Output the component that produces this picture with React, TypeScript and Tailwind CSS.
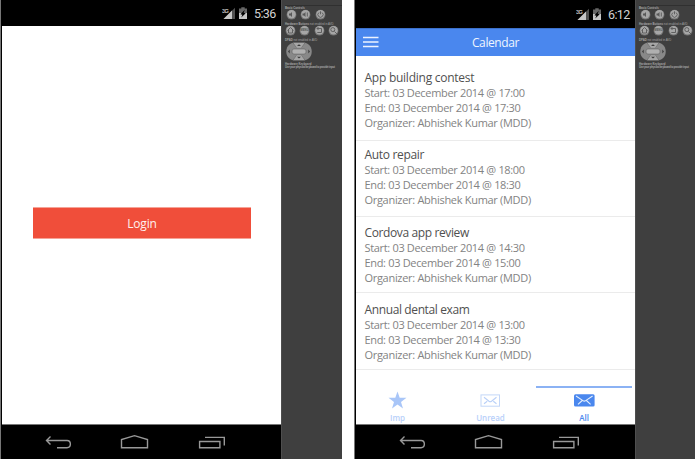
import React from "react";

const FONT = "font-['Open_Sans','Noto_Sans',sans-serif]";

const events = [
  { title: "App building contest", start: "17:00", end: "17:30", size: "h-[85px] pt-[14px]", tracking: "tracking-[-0.25px]" },
  { title: "Auto repair", start: "18:00", end: "18:30", size: "h-[76px] pt-[6px]", tracking: "tracking-[-0.32px]" },
  { title: "Cordova app review", start: "14:30", end: "15:00", size: "h-[76px] pt-[8px]", tracking: "tracking-[-0.38px]" },
  { title: "Annual dental exam", start: "13:00", end: "13:30", size: "h-[77px] pt-[9px]", tracking: "tracking-[-0.38px]" },
];

function StatusIcons() {
  return (
    <svg width="27" height="14" viewBox="0 0 27 14">
      <path d="M1.500 12 13 .7V12Z" fill="#505050" />
      <path d="M1.500 12 10 3.600V12Z" fill="#c6c6c6" />
      <text x="0" y="5.600" fontSize="6" fontWeight="700" fill="#c4c4c4" stroke="#000" strokeWidth=".6" paintOrder="stroke" fontFamily="Liberation Sans, sans-serif" textLength="7">3G</text>
      <path d="M17 1.600h2.300V.3h3.400v1.300H25V6h-8Z" fill="#666" />
      <path d="M17 6h8v6h-8Z" fill="#c6c6c6" />
      <path d="M22.800 2.800 18.400 7.200l2 .5-1.200 2.800 4.500-4.200-2-.5Z" fill="#000" />
    </svg>
  );
}

function StatusBar({ time, height }: { time: string; height: string }) {
  return (
    <div className={`flex shrink-0 items-center justify-end bg-black pr-[5px] pt-px ${height}`}>
      <StatusIcons />
      <span className="ml-[5px] w-[22px] whitespace-nowrap pt-px font-['Roboto',sans-serif] text-[12.5px] leading-none tracking-[-0.65px] text-[#d2d2d2]">{time}</span>
    </div>
  );
}

function NavBar() {
  return (
    <div className="h-[35px] shrink-0 border-t border-[#777] bg-black">
      <svg width="279" height="34" viewBox="0 0 279 34" fill="none" stroke="#999" strokeWidth="1.4">
        <path d="m48.500 11.500-4 4 4 4M44.500 15.500H65c4.500 0 4.500 7.200 0 7.200H55" />
        <path d="M119.500 22.800v-8.300l13-3.800 13 3.800v8.300Z" />
        <path d="M197.600 16.500h20.300v6.300h-20.300ZM203 12.400h19.300v8" />
      </svg>
    </div>
  );
}

function RoundKey({ children }: { children: React.ReactNode }) {
  return (
    <svg width="11" height="11" viewBox="0 0 11 11">
      <circle cx="5.500" cy="5.700" r="4.900" fill="#747474" />
      <circle cx="5.500" cy="5.300" r="4.200" fill="#a6a6a6" />
      <g fill="none" stroke="#585858" strokeWidth=".9">{children}</g>
    </svg>
  );
}

function Controls() {
  const label = "whitespace-nowrap text-[2.8px] leading-[5px] text-[#a5a5a5]";
  return (
    <aside className="flex w-[61px] shrink-0 flex-col border-l border-[#4e4e4e] bg-[#3f3f3f] pl-[3px] pt-[5px] font-['Liberation_Sans',sans-serif]">
      <div className="h-px bg-[#303030]" />
      <div className={`${label} h-[3px] font-bold`}>Basic Controls</div>
      <div className="flex h-[13px] items-start gap-[3.4px] pl-[1px]">
        <RoundKey><path d="M3 4.500h1.500L6 3v5L4.500 6.500H3Z" fill="#585858" stroke="none" /></RoundKey>
        <RoundKey><path d="M2.500 4.500H4L5.500 3v5L4 6.500H2.500Z" fill="#585858" stroke="none" /><path d="M7.300 3.500v4" /></RoundKey>
        <RoundKey><path d="M4 3.500a2.600 2.600 0 1 0 3 0M5.500 2.300v3" /></RoundKey>
      </div>
      <div className={`${label} h-[3px]`}><b>Hardware Buttons</b> not enabled in AVD</div>
      <div className="flex h-[13px] items-start gap-[3.400px]">
        <RoundKey><path d="m2.500 5.500 3-3 3 3M3.500 5v3h4V5" /></RoundKey>
        <RoundKey><text x="1.300" y="6.300" fontSize="2.800" fontWeight="700" stroke="none" fill="#505050" textLength="8.400">MENU</text></RoundKey>
        <RoundKey><path d="M3 3.500h4.500v4H3.300M4.500 2 3 3.500 4.500 5" /></RoundKey>
        <RoundKey><path d="M6.500 6.500 9 9" /><circle cx="4.800" cy="4.600" r="2" /></RoundKey>
      </div>
      <div className={`${label} h-[3px]`}><b>DPAD</b> not enabled in AVD</div>
      <svg className="mt-px" width="28" height="19" viewBox="0 0 28 19">
        <path d="M8 .7h12c9 2 9 15.600 0 17.600H8C-1 16.300-1 2.700 8 .7Z" fill="#888" />
        <path d="m8 .8 3 5h6l3-5ZM8 18.200l3-5h6l3 5Z" fill="#a6a6a6" />
        <path d="m8 .8 3.500 5M20 .8l-3.500 5M8 18.200l3.500-5M20 18.200l-3.500-5" stroke="#606060" strokeWidth=".6" />
        <rect x="7" y="6.900" width="14" height="5.200" rx="2" fill="#b0b0b0" stroke="#6b6b6b" strokeWidth=".7" />
        <path d="m12 4 2-1.700L16 4ZM12 14.800l2 1.700 2-1.700ZM4.700 7.500 3 9.500l1.700 2ZM23.300 7.500l1.700 2-1.700 2Z" fill="#3c3c3c" />
      </svg>
      <div className={`${label} mt-px h-[3px] font-bold`}>Hardware Keyboard</div>
      <div className={`${label} font-bold tracking-[-0.22px]`}>Use your physical keyboard to provide input</div>
    </aside>
  );
}

function Phone({ time, statusHeight, children }: { time: string; statusHeight: string; children: React.ReactNode }) {
  return (
    <section className="flex h-full shrink-0">
      <div className="flex w-[281px] flex-col border-l border-[#777] bg-black pl-px">
        <StatusBar time={time} height={statusHeight} />
        <div className="flex min-h-0 flex-1 flex-col bg-white">{children}</div>
        <NavBar />
      </div>
      <Controls />
    </section>
  );
}

function Envelope({ filled }: { filled?: boolean }) {
  return (
    <svg width="21" height="13" viewBox="0 0 21 13" fill="none">
      {filled ? (
        <rect x="0" y=".3" width="20.600" height="12.200" rx="1.500" fill="#4a87ee" />
      ) : (
        <rect x="1" y=".9" width="18.500" height="11.300" fill="white" stroke="#c3d7f8" />
      )}
      <path
        d={filled
          ? "m2 2 6.900 4.600c1 .7 1.800.7 2.800 0L18.600 2M4 10.300l4.200-3.800M16.600 10.300l-4.200-3.800"
          : "m4 3.300 5 4c.8.6 1.700.6 2.500 0l5-4M4 9.800l3.200-2.600M16.500 9.800l-3.200-2.600"}
        stroke={filled ? "#e5effd" : "#b9d0f8"}
        strokeWidth="1.100"
      />
    </svg>
  );
}

export default function App() {
  return (
    <main className={`flex h-[459px] w-[695px] gap-[12px] overflow-hidden bg-white ${FONT}`}>
      <Phone time="5:36" statusHeight="h-[26px]">
        <div className="px-[30px] pt-[181px]">
          <button className="ml-px flex h-[32px] w-[218px] items-center justify-center border-y border-[#f5a397] bg-[#f04e3a] pt-[2px] text-[12px] leading-none tracking-[-0.15px] text-[#fff1ef]">Login</button>
        </div>
      </Phone>
      <Phone time="6:12" statusHeight="h-[28px]">
        <header className="grid h-[28px] shrink-0 grid-cols-[30px_1fr_30px] items-center border-t border-[#3c70ca] bg-[#4a87ee] text-[#eff5ff]">
          <svg className="ml-[7px] -mt-[2px]" width="16" height="12" viewBox="0 0 16 12">
            <path d="M0 1.500h15.500M0 6h15.500M0 10.500h15.500" stroke="#edf3ff" strokeWidth="1.500" />
          </svg>
          <h1 className="pt-px text-center text-[12px] leading-none tracking-[-0.4px]">Calendar</h1>
        </header>
        <div className="shrink-0">
          {events.map((e) => (
            <article key={e.title} className={`border-b border-[#ebebeb] pl-[8.5px] ${e.size}`}>
              <h2 className={`h-[15px] whitespace-nowrap text-[12px] leading-[15px] text-[#505050] ${e.tracking}`}>{e.title}</h2>
              <div className="whitespace-nowrap text-[11px] leading-[15px] tracking-[-0.33px] text-[#838383]">
                <p>Start: 03 December 2014 @ {e.start}</p>
                <p>End: 03 December 2014 @ {e.end}</p>
                <p className="tracking-[-0.3px]">Organizer: Abhishek Kumar (MDD)</p>
              </div>
            </article>
          ))}
        </div>
        <nav className="mt-auto grid h-[38px] grid-cols-[87px_93px_99px] text-center text-[8px] font-semibold leading-[10px] text-[#b7cffa]">
          <div className="flex flex-col items-center pt-[5px] pr-[4px]">
            <svg width="19" height="18" viewBox="0 0 19 18"><path d="m9.500.5 2.200 6.300H18.500L13 10.900l2 6.600-5.500-4-5.500 4 2-6.600L.5 6.800h6.800Z" fill="#a9c6f8" /></svg>
            <span className="mt-[4px]">Imp</span>
          </div>
          <div className="flex flex-col items-center pl-[2px] pt-[8px]"><Envelope /><span className="mt-[6px]">Unread</span></div>
          <div className="mr-[3px] flex flex-col items-center border-t-2 border-[#8bb2f4] pt-[6px] text-[#4a87ee]"><Envelope filled /><span className="mt-[6px]">All</span></div>
        </nav>
      </Phone>
    </main>
  );
}
